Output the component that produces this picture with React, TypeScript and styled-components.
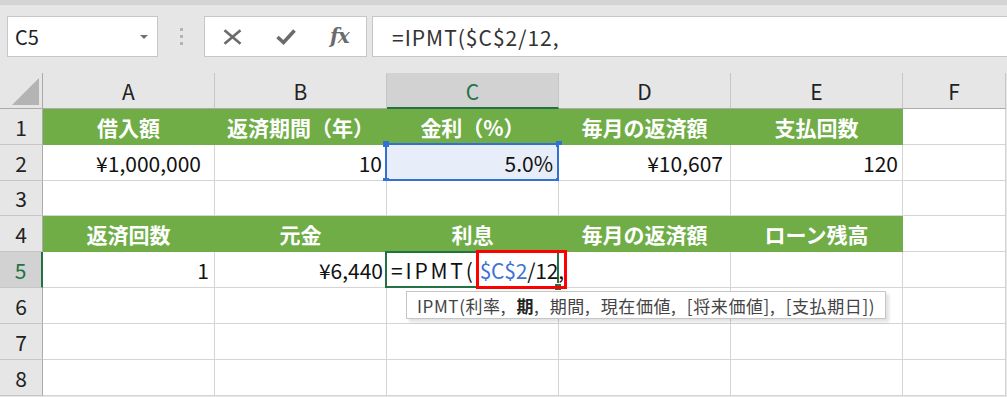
import React from "react";
import styled, { createGlobalStyle, css } from "styled-components";

const GlobalStyle = createGlobalStyle`
  html, body { margin: 0; padding: 0; background: #e6e6e6; }
  body {
    font-family: "Noto Sans CJK JP", "Noto Sans", sans-serif;
    overflow: hidden;
  }
  * { box-sizing: border-box; }
`;

const Window = styled.div`
  width: 1007px;
  height: 397px;
  display: flex;
  flex-direction: column;
  background: #e6e6e6;
  overflow: hidden;
`;

const TopStrip = styled.div`
  height: 5px;
  background: #d4d4d4;
  flex: none;
`;

const FormulaBar = styled.div`
  display: flex;
  align-items: stretch;
  height: 41px;
  margin-top: 11px;
  padding-left: 7px;
  flex: none;
`;

const NameBox = styled.div`
  width: 151px;
  border: 1px solid #c6c6c6;
  background: #fff;
  display: flex;
  align-items: center;
  justify-content: space-between;
  padding: 0 9px 0 7px;
  font-size: 20px;
  color: #222;
`;

const DropArrow = styled.span`
  width: 0;
  height: 0;
  border-left: 4px solid transparent;
  border-right: 4px solid transparent;
  border-top: 4px solid #707070;
`;

const Grip = styled.div`
  width: 46px;
  display: flex;
  flex-direction: column;
  align-items: center;
  justify-content: center;
  gap: 4px;
`;

const GripDot = styled.span`
  width: 3px;
  height: 3px;
  background: #b4b4b4;
`;

const FxBox = styled.div`
  width: 163px;
  border: 1px solid #c6c6c6;
  background: #fff;
  display: flex;
  align-items: center;
  padding-left: 1px;
`;

const IconSlot = styled.div`
  width: 54px;
  height: 100%;
  display: flex;
  align-items: center;
  justify-content: center;
  color: #6b6b6b;
`;

const FxText = styled.span`
  font-family: "DejaVu Serif", "Liberation Serif", serif;
  font-style: italic;
  font-weight: 700;
  font-size: 20px;
  color: #6b6b6b;
  letter-spacing: -1px;
  line-height: 1;
  margin-top: -2px;
`;

const FormulaInput = styled.div`
  flex: 1;
  margin-left: 5px;
  border: 1px solid #c6c6c6;
  border-right: none;
  background: #fff;
  display: flex;
  align-items: center;
  padding-left: 19px;
  font-size: 21px;
  letter-spacing: 1px;
  color: #333;
  white-space: nowrap;
`;

const Sheet = styled.div`
  margin-top: 16px;
  display: grid;
  grid-template-columns: 43px repeat(5, 172px) 103px;
  grid-template-rows: 36px 36px 36px 35px 36px 36px 36px 36px 36px;
  flex: none;
`;

const Corner = styled.div`
  background: #e6e6e6;
  border-right: 1px solid #ababab;
  border-bottom: 1px solid #ababab;
  display: flex;
  align-items: flex-end;
  justify-content: flex-end;
  padding: 0 3px 3px 0;
`;

const CornerTriangle = styled.span`
  width: 27px;
  height: 27px;
  background: #b4b4b4;
  clip-path: polygon(100% 0, 100% 100%, 0 100%);
`;

const ColHead = styled.div<{ $active?: boolean }>`
  background: ${(p) => (p.$active ? "#d2d2d2" : "#e6e6e6")};
  border-right: 1px solid #c6c6c6;
  border-bottom: ${(p) => (p.$active ? "2px solid #217346" : "1px solid #ababab")};
  display: flex;
  align-items: center;
  justify-content: center;
  font-size: 21px;
  color: ${(p) => (p.$active ? "#217346" : "#222")};
  padding-top: ${(p) => (p.$active ? "1px" : "0")};
`;

const RowHead = styled.div<{ $active?: boolean }>`
  background: ${(p) => (p.$active ? "#d2d2d2" : "#e6e6e6")};
  border-right: ${(p) => (p.$active ? "2px solid #217346" : "1px solid #ababab")};
  border-bottom: 1px solid #c6c6c6;
  display: flex;
  align-items: center;
  justify-content: center;
  font-size: 21px;
  color: ${(p) => (p.$active ? "#217346" : "#222")};
`;

const Cell = styled.div<{ $pad?: number }>`
  position: relative;
  background: #fff;
  border-right: 1px solid #d4d4d4;
  border-bottom: 1px solid #d4d4d4;
  display: flex;
  align-items: center;
  justify-content: flex-end;
  padding-right: ${(p) => p.$pad ?? 4}px;
  font-size: 21px;
  color: #111;
  white-space: nowrap;
`;

const HeadCell = styled.div`
  background: #70ad47;
  border-right: 1px solid #70ad47;
  border-bottom: 1px solid #70ad47;
  display: flex;
  align-items: center;
  justify-content: center;
  font-size: 21px;
  font-weight: 700;
  color: #fff;
  white-space: nowrap;
`;

const RefCell = styled(Cell)`
  background: #e8eef9;
`;

const RefFrame = styled.div`
  position: absolute;
  left: -2px;
  top: -2px;
  right: -1px;
  bottom: -1px;
  border: 2px solid #3370d4;
  pointer-events: none;
`;

const Handle = styled.span<{ $pos: "tl" | "tr" | "bl" | "br" }>`
  position: absolute;
  width: 6px;
  height: 6px;
  background: #3370d4;
  ${(p) =>
    p.$pos === "tl"
      ? css`left: -4px; top: -4px;`
      : p.$pos === "tr"
      ? css`right: -4px; top: -4px;`
      : p.$pos === "bl"
      ? css`left: -4px; bottom: -4px;`
      : css`right: -4px; bottom: -4px;`}
`;

const EditCell = styled(Cell)`
  z-index: 3;
  justify-content: flex-start;
  padding-left: 4px;
  padding-right: 0;
  overflow: visible;
`;

const EditFrame = styled.div`
  position: absolute;
  left: -2px;
  top: -1px;
  right: -1px;
  bottom: -1px;
  border: 2px solid #217346;
  pointer-events: none;
`;

const FillHandle = styled.span`
  position: absolute;
  right: -4px;
  bottom: -4px;
  width: 6px;
  height: 6px;
  background: #217346;
  border: 1px solid #fff;
  box-sizing: content-box;
`;

const Formula = styled.div`
  align-self: stretch;
  display: flex;
  align-items: center;
  color: #111;
`;

const FuncName = styled.span`
  letter-spacing: 2.8px;
`;

const Marked = styled.span`
  position: relative;
  align-self: stretch;
  display: flex;
  align-items: center;
  padding-left: 4px;
  letter-spacing: -0.2px;
  &::after {
    content: "";
    position: absolute;
    left: 0;
    right: -3px;
    top: -2px;
    bottom: -2px;
    border: 3px solid #ff0000;
    pointer-events: none;
  }
`;

const RefText = styled.span`
  color: #3d72d6;
`;

const Tooltip = styled.div`
  position: absolute;
  left: 19px;
  top: 39px;
  width: 480px;
  height: 28px;
  background: #fff;
  border: 1px solid #c6c6c6;
  box-shadow: 3px 3px 3px rgba(0, 0, 0, 0.12);
  display: flex;
  align-items: center;
  padding-left: 10px;
  font-size: 17px;
  letter-spacing: 0.6px;
  word-spacing: 6px;
  color: #444;
  white-space: pre;
  z-index: 4;
`;

const Strong = styled.b`
  font-weight: 700;
  color: #222;
`;

const CloseIcon = () => (
  <svg width="19" height="16" viewBox="0 0 19 16" fill="none">
    <path d="M1.5 1.2 L17.5 14.8 M17.5 1.2 L1.5 14.8" stroke="#6b6b6b" strokeWidth="2.6" />
  </svg>
);

const CheckIcon = () => (
  <svg width="20" height="16" viewBox="0 0 20 16" fill="none">
    <path d="M1.5 8 L7.5 13.5 L18.5 1.5" stroke="#6b6b6b" strokeWidth="3.6" strokeLinejoin="miter" />
  </svg>
);

const cols = ["A", "B", "C", "D", "E", "F"];

export default function App() {
  return (
    <Window>
      <GlobalStyle />
      <TopStrip />
      <FormulaBar>
        <NameBox>
          <span>C5</span>
          <DropArrow />
        </NameBox>
        <Grip>
          <GripDot />
          <GripDot />
          <GripDot />
        </Grip>
        <FxBox>
          <IconSlot>
            <CloseIcon />
          </IconSlot>
          <IconSlot>
            <CheckIcon />
          </IconSlot>
          <IconSlot>
            <FxText>fx</FxText>
          </IconSlot>
        </FxBox>
        <FormulaInput>=IPMT($C$2/12,</FormulaInput>
      </FormulaBar>
      <Sheet>
        <Corner>
          <CornerTriangle />
        </Corner>
        {cols.map((c) => (
          <ColHead key={c} $active={c === "C"}>
            {c}
          </ColHead>
        ))}

        <RowHead>1</RowHead>
        <HeadCell>借入額</HeadCell>
        <HeadCell>返済期間（年）</HeadCell>
        <HeadCell>金利（%）</HeadCell>
        <HeadCell>毎月の返済額</HeadCell>
        <HeadCell>支払回数</HeadCell>
        <Cell />

        <RowHead>2</RowHead>
        <Cell $pad={13}>¥1,000,000</Cell>
        <Cell $pad={4}>10</Cell>
        <RefCell $pad={5}>
          5.0%
          <RefFrame />
          <Handle $pos="tl" />
          <Handle $pos="tr" />
          <Handle $pos="bl" />
          <Handle $pos="br" />
        </RefCell>
        <Cell $pad={7}>¥10,607</Cell>
        <Cell $pad={4}>120</Cell>
        <Cell />

        <RowHead>3</RowHead>
        <Cell />
        <Cell />
        <Cell />
        <Cell />
        <Cell />
        <Cell />

        <RowHead>4</RowHead>
        <HeadCell>返済回数</HeadCell>
        <HeadCell>元金</HeadCell>
        <HeadCell>利息</HeadCell>
        <HeadCell>毎月の返済額</HeadCell>
        <HeadCell>ローン残高</HeadCell>
        <Cell />

        <RowHead $active>5</RowHead>
        <Cell $pad={5}>1</Cell>
        <Cell $pad={3}>¥6,440</Cell>
        <EditCell>
          <EditFrame />
          <FillHandle />
          <Formula>
            <FuncName>=IPMT(</FuncName>
            <Marked>
              <RefText>$C$2</RefText>/12,
            </Marked>
          </Formula>
          <Tooltip>
            {"IPMT(利率, "}
            <Strong>期</Strong>
            {", 期間, 現在価値, [将来価値], [支払期日])"}
          </Tooltip>
        </EditCell>
        <Cell />
        <Cell />
        <Cell />

        {[6, 7, 8].map((r) => (
          <React.Fragment key={r}>
            <RowHead>{r}</RowHead>
            <Cell />
            <Cell />
            <Cell />
            <Cell />
            <Cell />
            <Cell />
          </React.Fragment>
        ))}
      </Sheet>
    </Window>
  );
}
